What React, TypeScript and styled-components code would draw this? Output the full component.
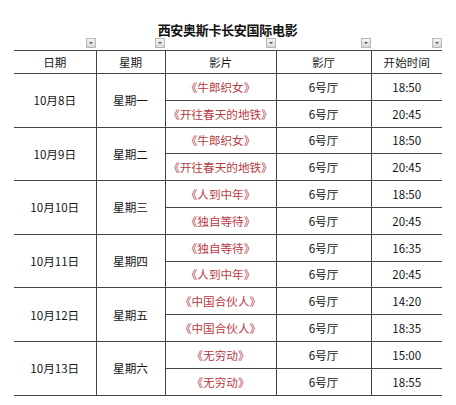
import React from "react";
import styled, { createGlobalStyle } from "styled-components";

const GlobalStyle = createGlobalStyle`
  html, body {
    margin: 0;
    padding: 0;
    background: #ffffff;
  }
  body {
    font-family: "Noto Sans CJK SC", "Noto Sans", sans-serif;
    color: #222;
  }
`;

const Page = styled.div`
  width: 456px;
  height: 405px;
  padding: 22px 0 0 14px;
  box-sizing: border-box;
  overflow: hidden;
`;

const Title = styled.div`
  width: 427px;
  text-align: center;
  font-size: 13px;
  font-weight: 700;
  line-height: 16px;
  color: #111;
  letter-spacing: -0.3px;
`;

const Sheet = styled.table`
  border-collapse: collapse;
  table-layout: fixed;
  width: 428px;
  font-size: 11.6px;
`;

const FilterCell = styled.td`
  height: 12px;
  padding: 0;
  text-align: right;
  vertical-align: bottom;
  line-height: 0;
`;

const FilterButton = styled.span`
  display: inline-block;
  width: 8px;
  height: 8px;
  margin-bottom: 2px;
  border: 1px solid #b8b8b8;
  background: linear-gradient(#f4f4f4, #d8d8d8);
  position: relative;
  &::after {
    content: "";
    position: absolute;
    left: 2px;
    top: 3px;
    border-left: 2px solid transparent;
    border-right: 2px solid transparent;
    border-top: 2px solid #555;
  }
`;

const HeadCell = styled.th<{ $last?: boolean }>`
  height: 22px;
  padding: 0;
  font-weight: 400;
  text-align: center;
  border-top: 1px solid #444;
  border-bottom: 1px solid #444;
  border-right: ${(p) => (p.$last ? "none" : "1px solid #444")};
  color: #1a1a1a;
`;

const Cell = styled.td<{ $last?: boolean; $movie?: boolean }>`
  height: 25.8px;
  padding: 0;
  text-align: center;
  white-space: nowrap;
  border-bottom: 1px solid #444;
  border-right: ${(p) => (p.$last ? "none" : "1px solid #444")};
  color: ${(p) => (p.$movie ? "#b83a44" : "#141414")};
`;

type Show = { movie: string; hall: string; time: string };
type Day = { date: string; week: string; shows: Show[] };

const days: Day[] = [
  {
    date: "10月8日",
    week: "星期一",
    shows: [
      { movie: "《牛郎织女》", hall: "6号厅", time: "18:50" },
      { movie: "《开往春天的地铁》", hall: "6号厅", time: "20:45" },
    ],
  },
  {
    date: "10月9日",
    week: "星期二",
    shows: [
      { movie: "《牛郎织女》", hall: "6号厅", time: "18:50" },
      { movie: "《开往春天的地铁》", hall: "6号厅", time: "20:45" },
    ],
  },
  {
    date: "10月10日",
    week: "星期三",
    shows: [
      { movie: "《人到中年》", hall: "6号厅", time: "18:50" },
      { movie: "《独自等待》", hall: "6号厅", time: "20:45" },
    ],
  },
  {
    date: "10月11日",
    week: "星期四",
    shows: [
      { movie: "《独自等待》", hall: "6号厅", time: "16:35" },
      { movie: "《人到中年》", hall: "6号厅", time: "20:45" },
    ],
  },
  {
    date: "10月12日",
    week: "星期五",
    shows: [
      { movie: "《中国合伙人》", hall: "6号厅", time: "14:20" },
      { movie: "《中国合伙人》", hall: "6号厅", time: "18:35" },
    ],
  },
  {
    date: "10月13日",
    week: "星期六",
    shows: [
      { movie: "《无穷动》", hall: "6号厅", time: "15:00" },
      { movie: "《无穷动》", hall: "6号厅", time: "18:55" },
    ],
  },
];

const columns = [
  { label: "日期", width: 82 },
  { label: "星期", width: 69 },
  { label: "影片", width: 111 },
  { label: "影厅", width: 95 },
  { label: "开始时间", width: 71 },
];

const App = () => {
  return (
    <>
      <GlobalStyle />
      <Page>
        <Title>西安奥斯卡长安国际电影</Title>
        <Sheet>
          <colgroup>
            {columns.map((c) => (
              <col key={c.label} style={{ width: c.width }} />
            ))}
          </colgroup>
          <thead>
            <tr>
              {columns.map((c) => (
                <FilterCell key={c.label}>
                  <FilterButton />
                </FilterCell>
              ))}
            </tr>
            <tr>
              {columns.map((c, i) => (
                <HeadCell key={c.label} $last={i === columns.length - 1}>
                  {c.label}
                </HeadCell>
              ))}
            </tr>
          </thead>
          <tbody>
            {days.map((d) =>
              d.shows.map((s, i) => (
                <tr key={d.date + i}>
                  {i === 0 && <Cell rowSpan={d.shows.length}>{d.date}</Cell>}
                  {i === 0 && <Cell rowSpan={d.shows.length}>{d.week}</Cell>}
                  <Cell $movie>{s.movie}</Cell>
                  <Cell>{s.hall}</Cell>
                  <Cell $last>{s.time}</Cell>
                </tr>
              ))
            )}
          </tbody>
        </Sheet>
      </Page>
    </>
  );
};

export default App;
